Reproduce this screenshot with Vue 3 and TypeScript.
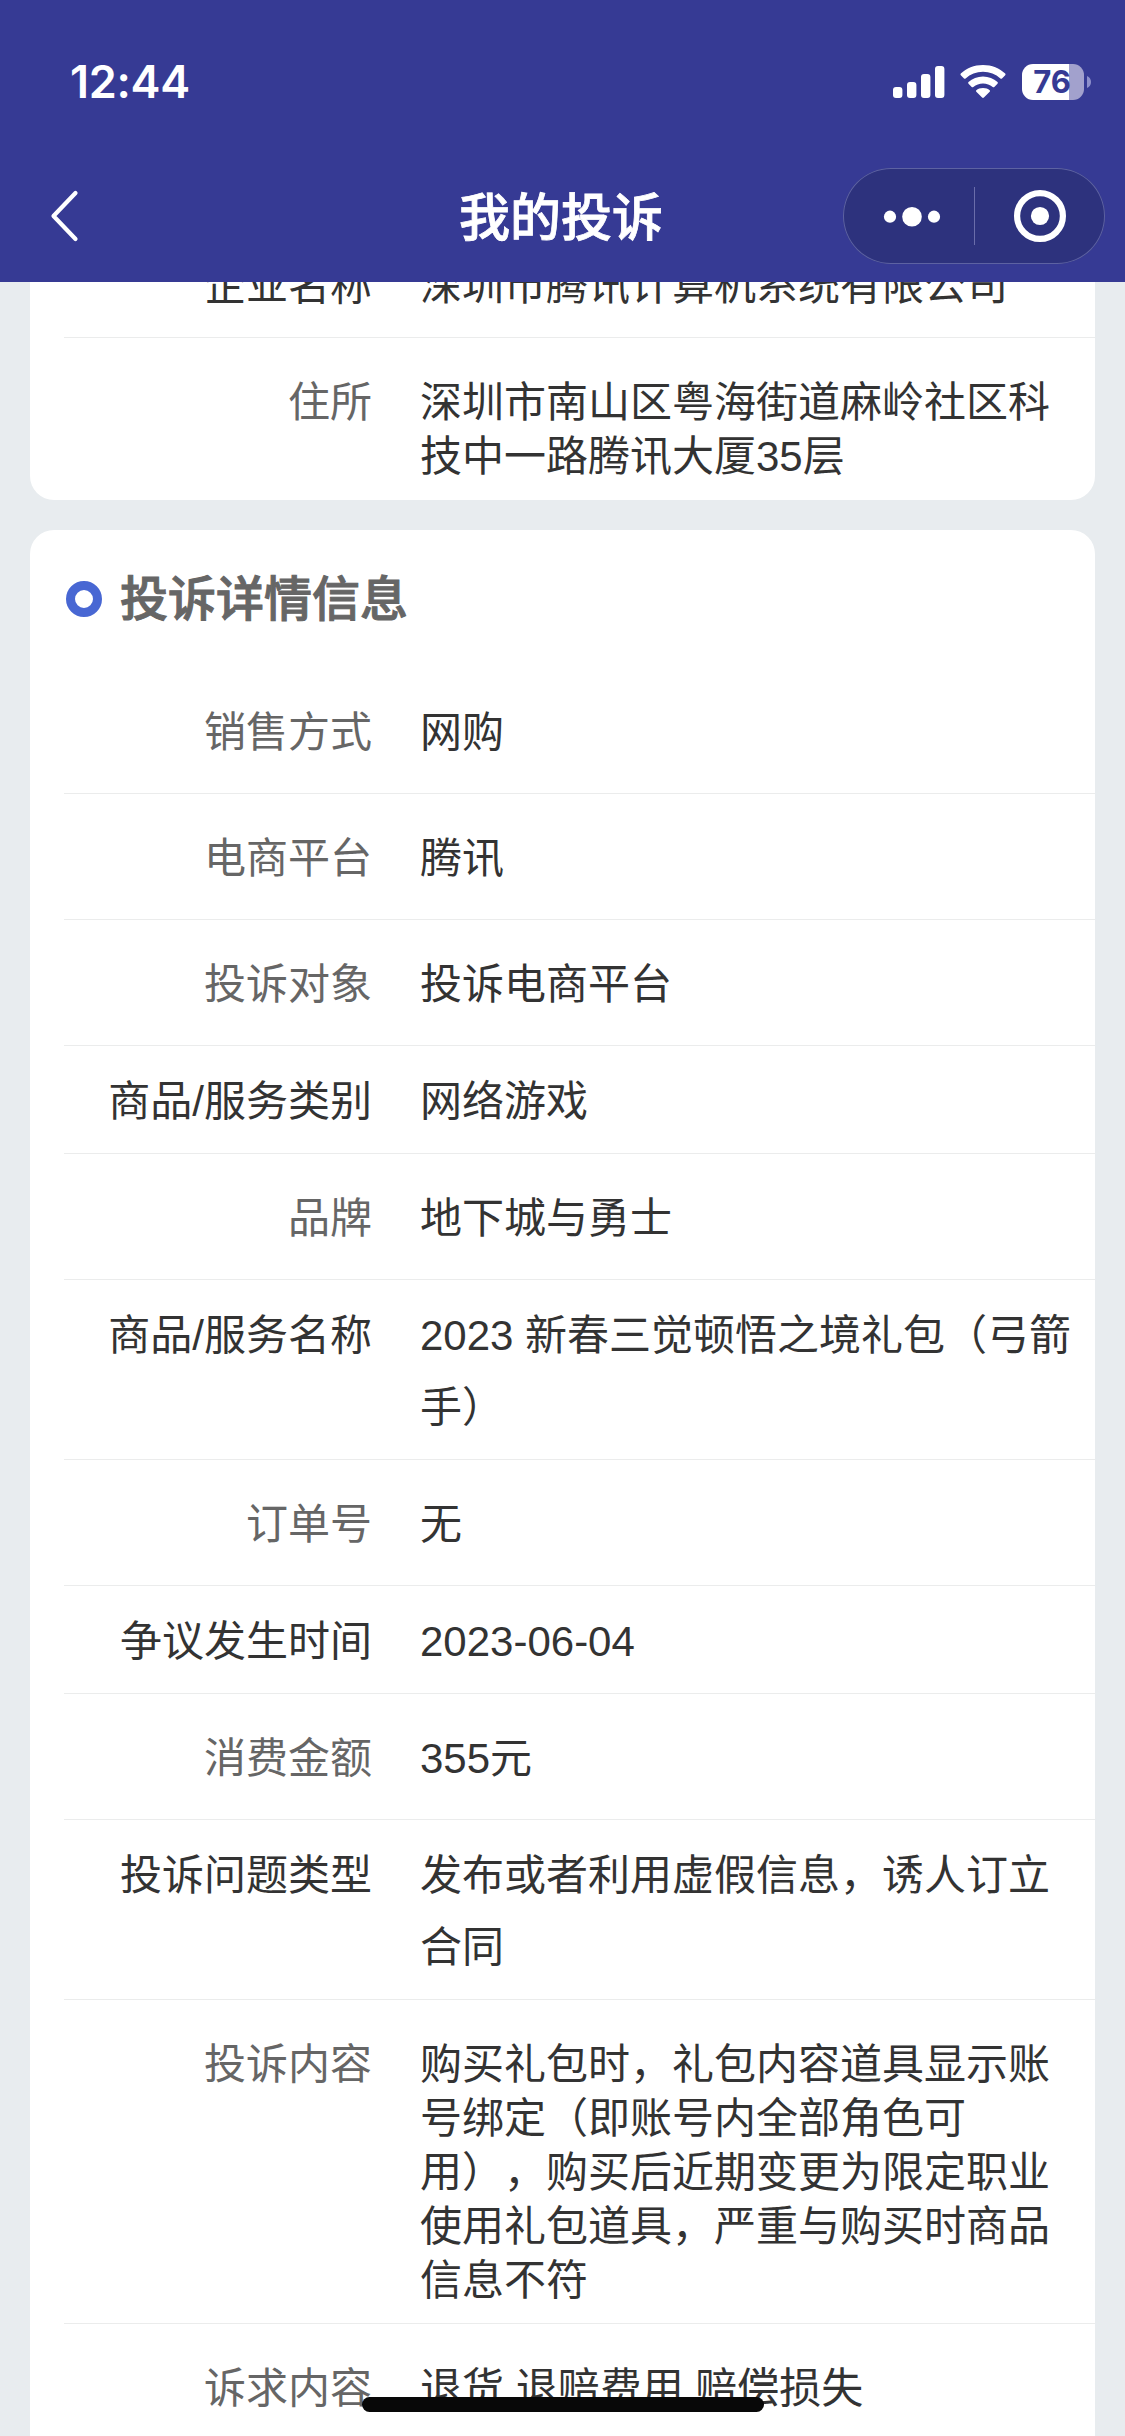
<script setup lang="ts">
interface Row {
  label: string
  lines: string[]
  // Read-only picker rows use a dark label and taller lines
  picker?: boolean
}

const company: Row[] = [
  { label: '企业名称', lines: ['深圳市腾讯计算机系统有限公司'], picker: true },
  { label: '住所', lines: ['深圳市南山区粤海街道麻岭社区科', '技中一路腾讯大厦35层'] },
]

const details: Row[] = [
  { label: '销售方式', lines: ['网购'] },
  { label: '电商平台', lines: ['腾讯'] },
  { label: '投诉对象', lines: ['投诉电商平台'] },
  { label: '商品/服务类别', lines: ['网络游戏'], picker: true },
  { label: '品牌', lines: ['地下城与勇士'] },
  { label: '商品/服务名称', lines: ['2023 新春三觉顿悟之境礼包（弓箭', '手）'], picker: true },
  { label: '订单号', lines: ['无'] },
  { label: '争议发生时间', lines: ['2023-06-04'], picker: true },
  { label: '消费金额', lines: ['355元'] },
  { label: '投诉问题类型', lines: ['发布或者利用虚假信息，诱人订立', '合同'], picker: true },
  {
    label: '投诉内容',
    lines: [
      '购买礼包时，礼包内容道具显示账',
      '号绑定（即账号内全部角色可',
      '用），购买后近期变更为限定职业',
      '使用礼包道具，严重与购买时商品',
      '信息不符',
    ],
  },
  { label: '诉求内容', lines: ['退货 退赔费用 赔偿损失'] },
]
</script>

<template>
  <div class="screen">
    <header class="header">
      <div class="status">
        <span class="time">12:44</span>
        <div class="indicators">
          <svg class="signal" width="52" height="34" viewBox="0 0 52 34" fill="#fff">
            <rect x="0" y="22" width="9.4" height="11" rx="3" />
            <rect x="14" y="17" width="9.4" height="16" rx="3" />
            <rect x="28" y="9" width="9.4" height="24" rx="3" />
            <rect x="42" y="1" width="9.4" height="32" rx="3" />
          </svg>
          <svg class="wifi" width="46" height="34" viewBox="0 0 46 34" fill="#fff">
            <path d="M23 0C32 0 39.6 3.3 45.2 8.6Q46 9.4 45.2 10.2L42 13.4Q41.2 14.2 40.4 13.4C35.6 9.1 29.8 6.8 23 6.8S10.4 9.1 5.6 13.4Q4.8 14.2 4 13.4L.8 10.2Q0 9.4 .8 8.6C6.4 3.3 14 0 23 0Z" />
            <path d="M23 11.6C28.7 11.6 33.6 13.7 37.5 17.1Q38.3 17.9 37.5 18.7L34.3 21.9Q33.5 22.7 32.7 21.9C29.9 19.6 26.7 18.4 23 18.4S16.1 19.6 13.3 21.9Q12.5 22.7 11.7 21.9L8.5 18.7Q7.7 17.9 8.5 17.1C12.4 13.7 17.3 11.6 23 11.6Z" />
            <path d="M23 23C26 23 28 23.9 29.7 25.3Q30.4 26 29.7 26.7L23.9 32.6Q23 33.4 22.1 32.6L16.3 26.7Q15.6 26 16.3 25.3C18 23.9 20 23 23 23Z" />
          </svg>
          <div class="battery"><span>76</span></div>
          <svg class="cap" width="4" height="12" viewBox="0 0 4 12"><path d="M0 0C2.5 1 4 3.2 4 6S2.5 11 0 12Z" fill="#8e90cb" /></svg>
        </div>
      </div>
      <div class="nav">
        <svg class="back" width="30" height="54" viewBox="0 0 30 54" fill="none" stroke="#fff" stroke-width="4.2" stroke-linecap="round" stroke-linejoin="round">
          <path d="M26.500 4L4.500 27L26.500 50" />
        </svg>
        <h1>我的投诉</h1>
        <div class="capsule">
          <svg width="262" height="96" viewBox="0 0 262 96" fill="#fff">
            <circle cx="47" cy="48.7" r="6.1" />
            <circle cx="69" cy="48.7" r="9.8" />
            <circle cx="91" cy="48.7" r="6.1" />
            <rect x="131" y="19" width="1" height="58" fill="#6a6daa" />
            <circle cx="197" cy="48" r="22.9" fill="none" stroke="#fff" stroke-width="6.2" />
            <circle cx="197" cy="48" r="9.1" />
          </svg>
        </div>
      </div>
    </header>

    <main class="content">
      <section class="card company">
        <div v-for="row in company" :key="row.label" class="row" :class="{ picker: row.picker }">
          <div class="label">{{ row.label }}</div>
          <div class="value"><p v-for="line in row.lines" :key="line">{{ line }}</p></div>
        </div>
      </section>
      <section class="card details">
        <div class="heading"><i class="ring"></i><h2>投诉详情信息</h2></div>
        <div v-for="row in details" :key="row.label" class="row" :class="{ picker: row.picker }">
          <div class="label">{{ row.label }}</div>
          <div class="value"><p v-for="line in row.lines" :key="line">{{ line }}</p></div>
        </div>
      </section>
    </main>
    <div class="home-bar"></div>
  </div>
</template>

<style>
body {
  margin: 0;
  background: #e8ecef;
}
</style>

<style scoped>
.screen {
  position: relative;
  display: flex;
  flex-direction: column;
  width: 1125px;
  height: 2436px;
  overflow: hidden;
  background: #e8ecef;
  color: #333;
  font-family: "Liberation Sans", "Noto Sans CJK SC", sans-serif;
  font-size: 42px;
  text-spacing-trim: space-all;
}
.header {
  flex: none;
  height: 282px;
  background: #363a94;
  color: #fff;
}
.status {
  display: flex;
  justify-content: space-between;
  align-items: center;
  height: 164px;
  padding: 0 34px 0 70px;
  box-sizing: border-box;
}
.time {
  font: 600 45px/54px Inter, sans-serif;
  letter-spacing: -0.3px;
}
.indicators {
  display: flex;
  align-items: center;
}
.wifi {
  margin-left: 15px;
}
.battery {
  width: 62px;
  height: 36px;
  margin-left: 16px;
  border-radius: 11px;
  background: linear-gradient(90deg, #fff 47px, #a2a1cd 47px);
  color: #363a94;
  font: 700 31px/36px Inter, sans-serif;
  text-align: center;
}
.battery span {
  padding-right: 2px;
}
.cap {
  margin-left: 3px;
}
.nav {
  display: flex;
  align-items: center;
  height: 104px;
  padding: 0 20px 0 49px;
}
.back {
  flex: none;
}
h1 {
  margin: 0 0 5px 380px;
  font: 500 51px/72px "Noto Sans CJK SC", sans-serif;
  -webkit-text-stroke: 0.8px currentColor;
}
.capsule {
  width: 262px;
  height: 96px;
  margin-left: auto;
  border-radius: 48px;
  background: #2d327d;
  box-shadow: inset 0 0 0 1px #5d62a2;
}
.capsule svg {
  display: block;
}
.content {
  flex: none;
  height: 2154px;
  overflow: hidden;
}
.card {
  margin: 0 30px 30px;
  padding-left: 34px;
  border-radius: 24px;
  background: #fff;
}
/* The list is scrolled so that the first row slips under the header */
.company {
  margin-top: -52px;
}
.details {
  padding-bottom: 60px;
}
.heading {
  display: flex;
  align-items: center;
  height: 138px;
}
.ring {
  width: 18px;
  height: 18px;
  margin-left: 2px;
  border: 9px solid #4867d3;
  border-radius: 50%;
}
h2 {
  margin: 0 0 9px 18px;
  color: #666;
  font: 500 48px/60px "Noto Sans CJK SC", sans-serif;
  -webkit-text-stroke: 1px currentColor;
}
.row {
  display: flex;
  border-bottom: 1px solid #ebecec;
  line-height: 54px;
}
.row:last-child {
  border-bottom: 0;
}
.label {
  width: 308px;
  padding: 38px 0 33px;
  color: #666;
  text-align: right;
}
.value {
  flex: 1;
  padding: 38px 0 15px 48px;
  white-space: nowrap;
}
.value p {
  margin: 0;
}
.row:last-child .value {
  padding-bottom: 16px;
}
.row.picker {
  line-height: 72px;
}
.picker .label {
  padding: 20px 0 15px;
  color: #333;
}
.picker .value {
  padding-top: 20px;
}
.home-bar {
  position: absolute;
  left: 362px;
  top: 2397px;
  width: 402px;
  height: 15px;
  border-radius: 8px;
  background: #080808;
}
</style>
